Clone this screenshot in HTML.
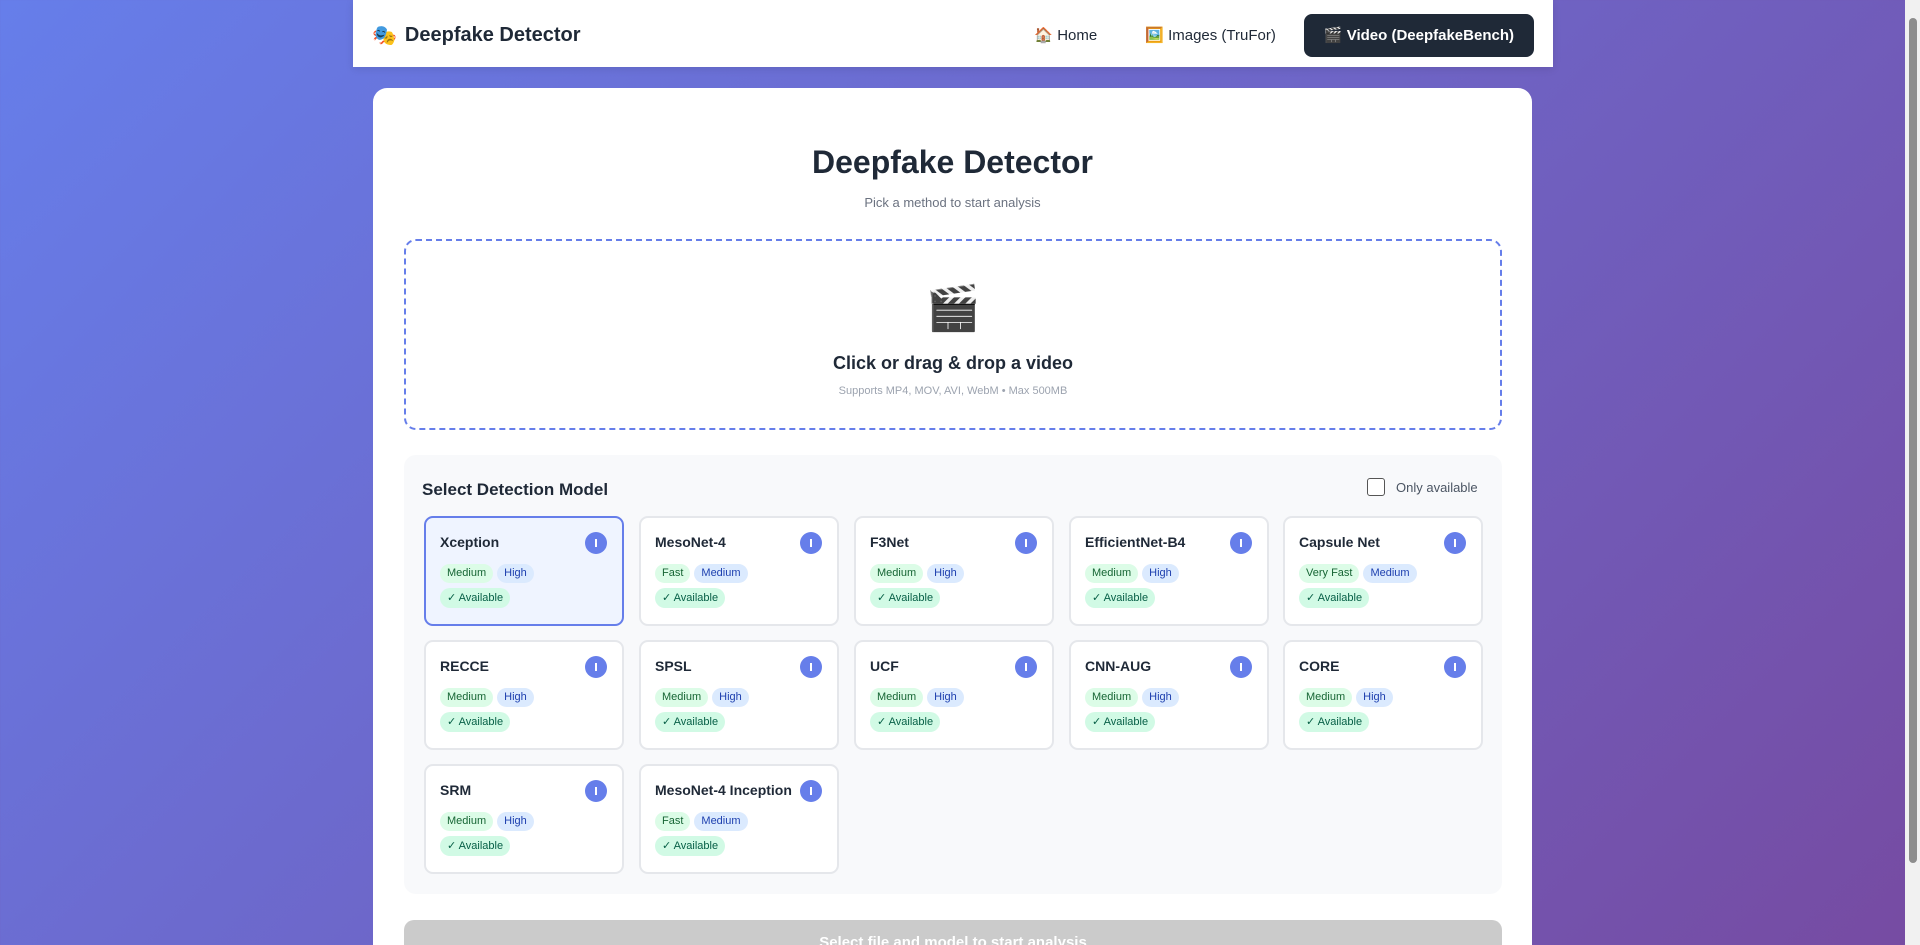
<!DOCTYPE html>
<html><head><meta charset="utf-8"><style>
*{box-sizing:border-box;margin:0;padding:0}
html,body{width:1920px;height:945px;overflow:hidden}
body{font-family:"Liberation Sans","DejaVu Sans",sans-serif;background:linear-gradient(135deg,#667eea 0%,#764ba2 100%);position:relative;color:#1f2937}
.nav{position:absolute;left:353px;top:0;width:1200px;height:67px;background:#fff;display:flex;align-items:center;padding:0 19px;box-shadow:0 2px 8px rgba(0,0,0,.1)}
.brand{font-size:20px;font-weight:bold;color:#1f2937;display:flex;align-items:center;gap:8px;margin-top:3px}
.links{margin-left:auto;display:flex;align-items:center;gap:8px;margin-top:3px}
.links a{font-size:15px;color:#1f2937;padding:12px 20px;border-radius:8px;text-decoration:none;display:flex;gap:8px;align-items:center}
.links a.act{background:#1f2937;color:#fff;font-weight:bold;height:43px;padding:0 20px}
.card{position:absolute;left:373px;top:88px;width:1159px;height:900px;background:#fff;border-radius:14px}
h1{position:absolute;top:56px;width:100%;text-align:center;font-size:32px;font-weight:bold;color:#1f2937}
.sub{position:absolute;top:107px;width:100%;text-align:center;font-size:13px;color:#6b7280}
.drop{position:absolute;left:31px;top:151px;width:1098px;height:191px;border:2.5px dashed #667eea;border-radius:12px;text-align:center}
.drop .ic{font-size:44px;margin-top:43px;line-height:50px}
.drop .t{font-size:18px;font-weight:bold;margin-top:19px}
.drop .s{font-size:11px;color:#9ca3af;margin-top:11px}
.models{position:absolute;left:31px;top:367px;width:1098px;height:439px;background:#f8f9fb;border-radius:12px}
.models h3{position:absolute;left:18px;top:25px;font-size:17px;font-weight:bold}
.only{position:absolute;left:963px;top:23px;display:flex;align-items:center;font-size:13px;color:#4b5563}
.only i{display:inline-block;width:18px;height:18px;border:1.5px solid #555;border-radius:3px;margin-right:11px;background:#fff}
.m{position:absolute;width:200px;height:110px;background:#fff;border:2px solid #e5e7eb;border-radius:9px;padding:0 13px}
.m.sel{background:#eff4ff;border-color:#667eea}
.m b{position:absolute;left:14px;top:16px;font-size:14px}
.m .i{position:absolute;right:15px;top:14px;width:22px;height:22px;border-radius:50%;background:#667eea}
.m .i:after{content:"";position:absolute;left:10px;top:7px;width:2px;height:8px;background:#fff}
.bd{position:absolute;left:14px;top:46px;display:flex;gap:4px;flex-wrap:wrap;width:160px}
.bd span{font-size:11px;height:19px;line-height:19px;padding:0 7px;border-radius:10px}
.g{background:#dcfce7;color:#166534}.b{background:#dbeafe;color:#1e40af}
.av{position:absolute;left:14px;top:70px;font-size:11px;height:20px;line-height:20px;padding:0 7px;border-radius:10px;background:#d1fae5;color:#065f46}
.btn{position:absolute;left:31px;top:832px;width:1098px;height:60px;background:#cbcbcb;border-radius:10px;color:#fff;font-weight:bold;font-size:15px;text-align:center;padding-top:14px}
.sb{position:absolute;right:0;top:0;width:15px;height:945px;background:#f1f1f1}
.sb i{position:absolute;left:4px;top:18px;width:8px;height:845px;background:#8d8d8d;border-radius:4px}
</style></head><body>
<div class="nav"><div class="brand"><span style="font-size:20px">🎭</span>Deepfake Detector</div>
<div class="links"><a>🏠 Home</a><a>🖼️ Images (TruFor)</a><a class="act">🎬 Video (DeepfakeBench)</a></div></div>
<div class="card">
<h1>Deepfake Detector</h1>
<div class="sub">Pick a method to start analysis</div>
<div class="drop"><div class="ic">🎬</div><div class="t">Click or drag &amp; drop a video</div><div class="s">Supports MP4, MOV, AVI, WebM • Max 500MB</div></div>
<div class="models"><h3>Select Detection Model</h3><div class="only"><i></i>Only available</div>
<div class="m sel" style="left:20px;top:61px"><b>Xception</b><div class="i"></div><div class="bd"><span class="g">Medium</span><span class="b">High</span></div><div class="av">✓ Available</div></div>
<div class="m" style="left:235px;top:61px"><b>MesoNet-4</b><div class="i"></div><div class="bd"><span class="g">Fast</span><span class="b">Medium</span></div><div class="av">✓ Available</div></div>
<div class="m" style="left:450px;top:61px"><b>F3Net</b><div class="i"></div><div class="bd"><span class="g">Medium</span><span class="b">High</span></div><div class="av">✓ Available</div></div>
<div class="m" style="left:665px;top:61px"><b>EfficientNet-B4</b><div class="i"></div><div class="bd"><span class="g">Medium</span><span class="b">High</span></div><div class="av">✓ Available</div></div>
<div class="m" style="left:879px;top:61px"><b>Capsule Net</b><div class="i"></div><div class="bd"><span class="g">Very Fast</span><span class="b">Medium</span></div><div class="av">✓ Available</div></div>
<div class="m" style="left:20px;top:185px"><b>RECCE</b><div class="i"></div><div class="bd"><span class="g">Medium</span><span class="b">High</span></div><div class="av">✓ Available</div></div>
<div class="m" style="left:235px;top:185px"><b>SPSL</b><div class="i"></div><div class="bd"><span class="g">Medium</span><span class="b">High</span></div><div class="av">✓ Available</div></div>
<div class="m" style="left:450px;top:185px"><b>UCF</b><div class="i"></div><div class="bd"><span class="g">Medium</span><span class="b">High</span></div><div class="av">✓ Available</div></div>
<div class="m" style="left:665px;top:185px"><b>CNN-AUG</b><div class="i"></div><div class="bd"><span class="g">Medium</span><span class="b">High</span></div><div class="av">✓ Available</div></div>
<div class="m" style="left:879px;top:185px"><b>CORE</b><div class="i"></div><div class="bd"><span class="g">Medium</span><span class="b">High</span></div><div class="av">✓ Available</div></div>
<div class="m" style="left:20px;top:309px"><b>SRM</b><div class="i"></div><div class="bd"><span class="g">Medium</span><span class="b">High</span></div><div class="av">✓ Available</div></div>
<div class="m" style="left:235px;top:309px"><b>MesoNet-4 Inception</b><div class="i"></div><div class="bd"><span class="g">Fast</span><span class="b">Medium</span></div><div class="av">✓ Available</div></div>
</div>
<div class="btn">Select file and model to start analysis</div>
</div>
<div class="sb"><i></i></div>
</body></html>
